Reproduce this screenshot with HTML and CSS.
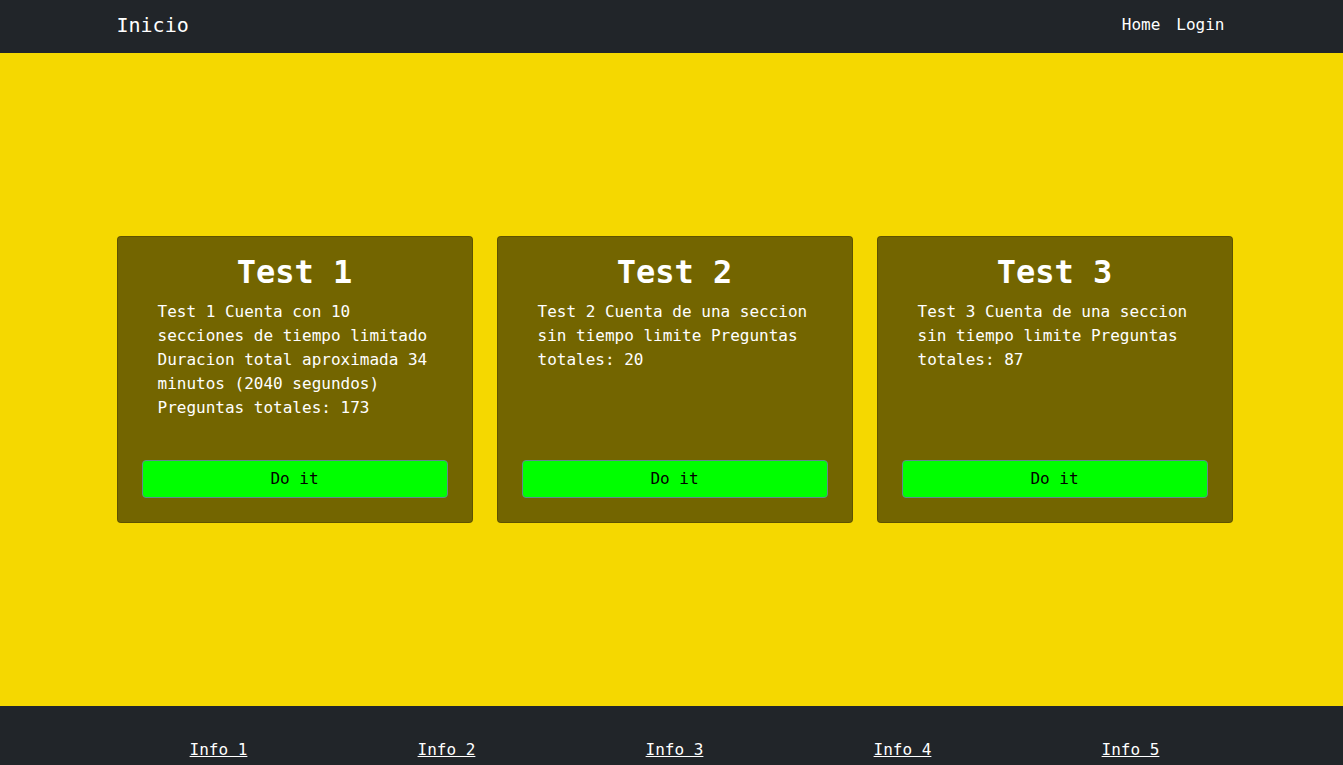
FILE: index.html
```html
<!DOCTYPE html>
<html lang="es">
<head>
<meta charset="utf-8">
<title>Inicio</title>
<link rel="stylesheet" href="styles.css">
</head>
<body>
<nav class="topbar">
  <div class="container nav-inner">
    <a class="brand" href="#">Inicio</a>
    <div class="nav-links">
      <a href="#">Home</a>
      <a href="#">Login</a>
    </div>
  </div>
</nav>
<main class="main">
  <div class="container cards">
    <div class="col">
      <div class="card">
        <h2 class="card-title">Test 1</h2>
        <p class="card-text">Test 1 Cuenta con 10 secciones de tiempo limitado Duracion total aproximada 34 minutos (2040 segundos) Preguntas totales: 173</p>
        <button class="btn">Do it</button>
      </div>
    </div>
    <div class="col">
      <div class="card">
        <h2 class="card-title">Test 2</h2>
        <p class="card-text">Test 2 Cuenta de una seccion sin tiempo limite Preguntas totales: 20</p>
        <button class="btn">Do it</button>
      </div>
    </div>
    <div class="col">
      <div class="card">
        <h2 class="card-title">Test 3</h2>
        <p class="card-text">Test 3 Cuenta de una seccion sin tiempo limite Preguntas totales: 87</p>
        <button class="btn">Do it</button>
      </div>
    </div>
  </div>
</main>
<footer class="footer">
  <div class="container footer-links">
    <a href="#">Info 1</a>
    <a href="#">Info 2</a>
    <a href="#">Info 3</a>
    <a href="#">Info 4</a>
    <a href="#">Info 5</a>
  </div>
</footer>
</body>
</html>
```
FILE: styles.css
```css
* { box-sizing: border-box; }
html, body { margin: 0; height: 765px; overflow: hidden; }
body {
  font-family: "DejaVu Sans Mono", monospace;
  font-size: 16px;
  line-height: 24px;
  color: #fff;
  background: #f5d800;
  padding-left: 6px;
}
.container {
  width: 1140px;
  margin: 0 auto;
}
.topbar {
  background: #212529;
  height: 53px;
  margin-left: -6px;
  padding-left: 6px;
}
.nav-inner {
  height: 53px;
  display: flex;
  align-items: center;
  justify-content: space-between;
  padding: 0 12px;
}
.brand {
  color: #fff;
  text-decoration: none;
  font-size: 20px;
  line-height: 30px;
  margin-top: -4px;
}
.nav-links { display: flex; margin-top: -4px; }
.nav-links a {
  color: #fff;
  text-decoration: none;
  padding: 0 8px;
}
.main {
  height: 653px;
  display: flex;
  align-items: center;
}
.cards {
  display: flex;
}
.col {
  flex: 1 1 0;
  padding: 0 12px;
  display: flex;
}
.card {
  flex: 1;
  display: flex;
  flex-direction: column;
  background: #736500;
  border: 1px solid rgba(0,0,0,.18);
  border-radius: 4px;
  padding: 16px 24px 24px;
}
.card-title {
  margin: 0 0 9px;
  font-size: 32px;
  line-height: 38px;
  font-weight: bold;
  text-align: center;
}
.card-text {
  margin: 0 16px 40px;
  flex: 1;
}
.btn {
  display: block;
  width: 100%;
  height: 38px;
  background: #00ff00;
  border: 1px solid #5f8a8f;
  border-radius: 4px;
  font-family: "DejaVu Sans Mono", monospace;
  font-size: 16px;
  line-height: 24px;
  color: #000;
  padding: 0 0 1px;
}
.footer {
  background: #212529;
  height: 59px;
  margin-left: -6px;
  padding-left: 6px;
  padding-top: 32px;
}
.footer-links {
  display: flex;
}
.footer-links a {
  flex: 1 1 0;
  text-align: center;
  color: #fff;
  text-decoration: underline;
}
```
